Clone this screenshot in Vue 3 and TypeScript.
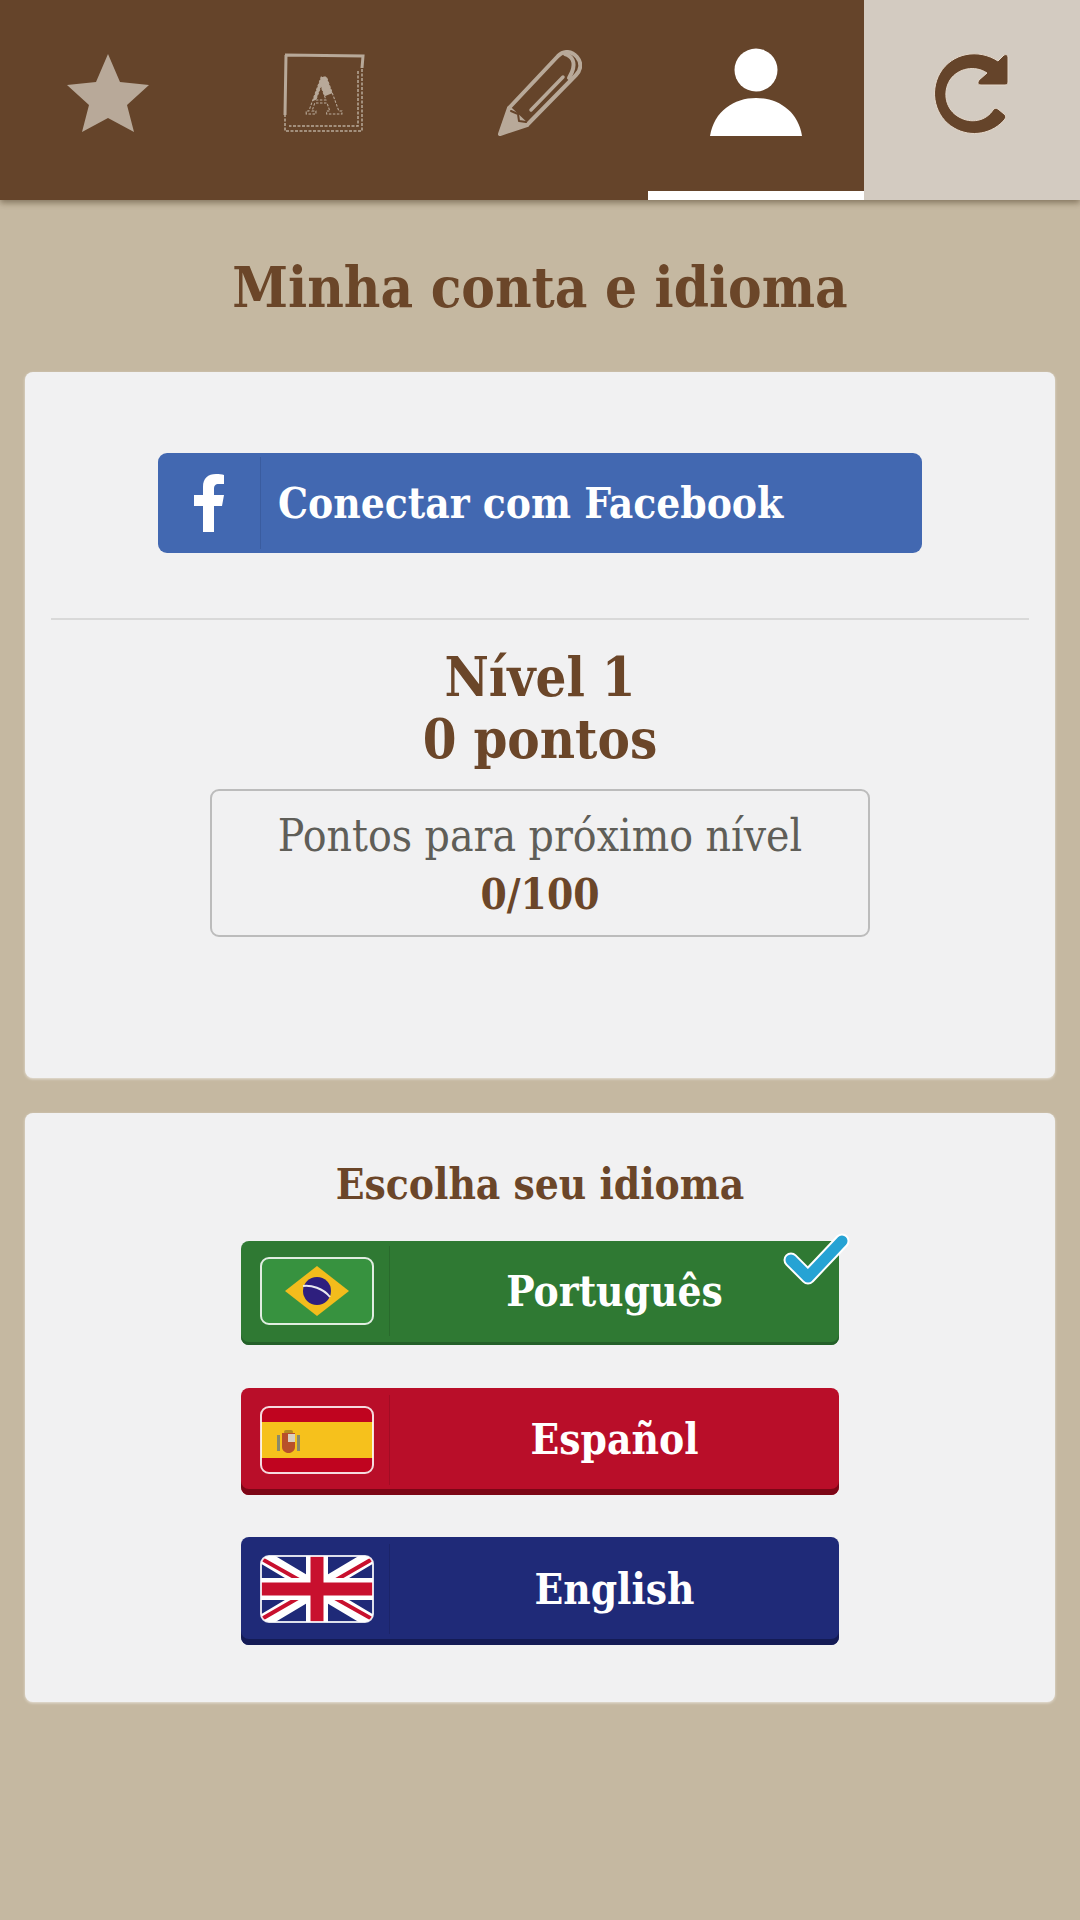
<script setup lang="ts">
interface Language {
  name: string
  code: 'pt' | 'es' | 'en'
  selected: boolean
}

const languages: Language[] = [
  { name: 'Português', code: 'pt', selected: true },
  { name: 'Español', code: 'es', selected: false },
  { name: 'English', code: 'en', selected: false },
]
</script>

<template>
  <div class="page">
    <header class="tabs">
      <div class="tab">
        <svg width="84" height="80" viewBox="0 0 84 80">
          <path d="M42 1 L54 29 L83 32 L61 52 L68 79 L42 65 L16 79 L23 52 L1 32 L30 29 Z" fill="#b8a999" />
        </svg>
      </div>
      <div class="tab">
        <svg width="82" height="80" viewBox="0 0 82 80" fill="none" stroke="#b8a999">
          <path d="M2 2 L80 3 L79 15 M3 2 L2 62" stroke-width="3" />
          <path d="M79 16 V78 H2 V62 M75 18 V73 H6" stroke-width="1.5" stroke-dasharray="3 1.5" />
          <text x="41" y="61" text-anchor="middle" class="icon-letter" fill="none" stroke-width="1" stroke-dasharray="2.5 1.5">A</text>
          <clipPath id="a-top"><path d="M20 16 H62 V35 L30 48 H20 Z" /></clipPath>
          <text x="41" y="61" text-anchor="middle" class="icon-letter" fill="#b8a999" stroke="none" clip-path="url(#a-top)">A</text>
        </svg>
      </div>
      <div class="tab">
        <svg width="84" height="86" viewBox="0 0 84 86" fill="none" stroke="#b8a999" stroke-width="4" stroke-linejoin="round" stroke-linecap="round">
          <path d="M11 58 L60 6 C66 0 74 1 79 7 C84 13 83 20 78 25 L29 75" />
          <path d="M67 4 C74 6 78 12 74 22 L71 28" />
          <path d="M33 60 L65 27" stroke-width="3.5" />
          <path d="M11 58 L2 84 L29 75 Z" fill="#b8a999" />
          <path d="M13 61 L20 64 L21 71 L28 72" stroke="#65442a" stroke-width="2" />
        </svg>
      </div>
      <div class="tab active">
        <svg width="94" height="90" viewBox="0 0 94 90">
          <circle cx="47" cy="22" r="21.5" fill="#fff" />
          <path d="M1 88 C5 63 25 50 47 50 C69 50 89 63 93 88 Z" fill="#fff" />
        </svg>
      </div>
      <div class="tab refresh">
        <svg width="82" height="82" viewBox="0 0 82 82">
          <path d="M73 3 C74.500 2 77 3 77 5 V30 C77 32 76 33 74 33 H50 C47 33 46 31 48 28 L56 21 C44 13 27 16 19 28 C11 41 15 58 28 65 C40 72 55 69 62 58 C63 56 65 56 67 57 L73 62 C75 63 75 65 74 67 C62 82 40 86 23 76 C4 65 -2 40 9 21 C21 1 47 -4 67 9 Z" fill="#65442a" stroke="#e6d9cb" stroke-width="1" />
        </svg>
      </div>
    </header>

    <main class="content">
      <h1 class="title">Minha conta e idioma</h1>

      <section class="card account">
        <button class="fb-btn">
          <span class="fb-icon">
            <svg width="30" height="58" viewBox="0 0 30 58">
              <path d="M9 58 V32 H0 V21 H9 V13 C9 4 14 0 22 0 C25 0 28 0 30 1 V10 H25 C21 10 20 12 20 15 V21 H30 L28 32 H20 V58 Z" fill="#fff" />
            </svg>
          </span>
          <span class="fb-label">Conectar com Facebook</span>
        </button>
        <hr class="divider">
        <div class="level">Nível 1</div>
        <div class="level">0 pontos</div>
        <div class="progress">
          <div class="progress-label">Pontos para próximo nível</div>
          <div class="progress-value">0/100</div>
        </div>
      </section>

      <section class="card languages">
        <h2 class="subtitle">Escolha seu idioma</h2>
        <button v-for="lang in languages" :key="lang.code" class="lang-btn" :class="lang.code">
          <span class="flag-cell">
            <svg class="flag" width="114" height="68" viewBox="0 0 114 68">
              <defs>
                <clipPath :id="`clip-${lang.code}`"><rect x="1" y="1" width="112" height="66" rx="8" /></clipPath>
              </defs>
              <g :clip-path="`url(#clip-${lang.code})`">
                <template v-if="lang.code === 'pt'">
                  <rect width="114" height="68" fill="#37923f" />
                  <path d="M57 9 L89 34 L57 59 L25 34 Z" fill="#f3bc1c" />
                  <circle cx="57" cy="34" r="14" fill="#2e1f7e" />
                  <path d="M43 29 C51 28 63 31 70 40" fill="none" stroke="#e8e8f0" stroke-width="2" />
                </template>
                <template v-else-if="lang.code === 'es'">
                  <rect width="114" height="68" fill="#c0041f" />
                  <rect y="16" width="114" height="36" fill="#f6c11c" />
                  <rect x="24" y="24" width="9" height="4" rx="2" fill="#b58a20" />
                  <path d="M22 27 H35 V41 C35 45 31 47 28.500 47 C26 47 22 45 22 41 Z" fill="#b8502a" />
                  <rect x="28" y="28" width="7" height="8" fill="#d9d0c0" />
                  <rect x="17" y="29" width="3" height="16" fill="#8a8a6a" />
                  <rect x="37" y="29" width="3" height="16" fill="#8a8a6a" />
                </template>
                <template v-else>
                  <rect width="114" height="68" fill="#1f2a78" />
                  <path d="M0 0 L114 68 M114 0 L0 68" stroke="#fff" stroke-width="14" />
                  <path d="M0 3 L57 35 M114 3 L62 33 M0 65 L52 35 M114 65 L57 33" stroke="#c8102e" stroke-width="4" />
                  <path d="M57 0 V68 M0 34 H114" stroke="#fff" stroke-width="22" />
                  <path d="M57 0 V68 M0 34 H114" stroke="#c8102e" stroke-width="13" />
                </template>
              </g>
              <rect x="1" y="1" width="112" height="66" rx="8" fill="none" stroke="#fff" stroke-width="2" opacity="0.85" />
            </svg>
          </span>
          <span class="lang-name">{{ lang.name }}</span>
          <svg v-if="lang.selected" class="check" width="68" height="56" viewBox="0 0 68 56">
            <path d="M8 28 L25 45 L59 9" fill="none" stroke="#fff" stroke-width="15" stroke-linecap="round" stroke-linejoin="round" />
            <path d="M8 28 L25 45 L59 9" fill="none" stroke="#26a3d4" stroke-width="11" stroke-linecap="round" stroke-linejoin="round" />
          </svg>
        </button>
      </section>
    </main>
  </div>
</template>

<style>
html, body {
  margin: 0;
  background: #c5b8a1;
}
</style>

<style scoped>
.page {
  width: 1080px;
  height: 1920px;
  overflow: hidden;
  background: #c5b8a1;
  font-family: "DejaVu Serif Condensed", "DejaVu Serif", serif;
  font-stretch: condensed;
}
.tabs {
  display: flex;
  height: 200px;
  background: #65442a;
  box-shadow: 0 3px 6px rgba(60, 45, 20, 0.45);
}
.tab {
  flex: 1;
  display: flex;
  align-items: center;
  justify-content: center;
  padding-bottom: 14px;
  box-sizing: border-box;
}
.tab.active {
  border-bottom: 9px solid #fff;
  padding-bottom: 5px;
}
.tab.refresh {
  background: #d3cbc1;
}
.icon-letter {
  font-family: "DejaVu Serif", serif;
  font-weight: 700;
  font-size: 50px;
}
.content {
  padding: 0 25px;
}
.title {
  margin: 0;
  padding: 55px 0 53px;
  text-align: center;
  font-size: 56px;
  line-height: 64px;
  font-weight: 700;
  color: #6b4629;
}
.card {
  background: #f1f1f2;
  border-radius: 8px;
  box-shadow: 0 1px 3px rgba(255, 255, 255, 0.6);
  text-align: center;
  box-sizing: border-box;
}
.account {
  height: 706px;
  padding: 81px 26px 0;
  margin-bottom: 35px;
}
.languages {
  height: 589px;
  padding-top: 44px;
}
button {
  font: inherit;
  border: 0;
  padding: 0;
  cursor: pointer;
}
.fb-btn {
  display: flex;
  align-items: center;
  width: 764px;
  height: 100px;
  margin: 0 auto;
  background: #4268b1;
  border-radius: 9px;
  color: #fff;
  font-weight: 700;
  font-size: 42px;
  text-align: left;
}
.fb-icon {
  display: flex;
  align-items: center;
  justify-content: center;
  width: 102px;
  height: 92px;
  flex: none;
  border-right: 1px solid #3a5c9f;
}
.fb-label {
  padding-left: 17px;
  white-space: nowrap;
}
.divider {
  margin: 65px 0 26px;
  border: 0;
  border-top: 2px solid #d9d9d9;
}
.level {
  font-size: 54px;
  line-height: 62px;
  font-weight: 700;
  color: #6b4629;
}
.progress {
  width: 660px;
  height: 148px;
  margin: 19px auto 0;
  box-sizing: border-box;
  border: 2px solid #bcbcbc;
  border-radius: 9px;
  padding-top: 14px;
}
.progress-label {
  font-size: 44px;
  line-height: 62px;
  font-weight: 400;
  color: #5f5e58;
}
.progress-value {
  font-size: 42px;
  line-height: 56px;
  font-weight: 700;
  color: #6b4629;
}
.subtitle {
  margin: 0 0 28px;
  font-size: 42px;
  line-height: 56px;
  font-weight: 700;
  color: #6b4629;
}
.lang-btn {
  position: relative;
  display: flex;
  align-items: center;
  width: 598px;
  height: 106px;
  margin: 0 auto 42px;
  border-radius: 8px;
  color: #fff;
  font-weight: 700;
  font-size: 42px;
}
.lang-btn.pt {
  background: #2f7933;
  box-shadow: inset 0 -3px 0 #24602a;
  height: 104px;
  margin-bottom: 43px;
}
.lang-btn.es {
  background: #b90e29;
  box-shadow: inset 0 -6px 0 #7c0616;
  height: 107px;
}
.lang-btn.en {
  background: #1f2a78;
  box-shadow: inset 0 -6px 0 #141b55;
  height: 108px;
}
.flag-cell {
  flex: none;
  display: flex;
  align-items: center;
  width: 149px;
  height: 90px;
  padding-left: 19px;
  box-sizing: border-box;
  border-right: 1px solid rgba(0, 0, 0, 0.12);
  margin-bottom: 4px;
}
.flag {
  display: block;
}
.lang-name {
  flex: 1;
  text-align: center;
  margin-bottom: 4px;
}
.check {
  position: absolute;
  top: -9px;
  right: -12px;
}
</style>
